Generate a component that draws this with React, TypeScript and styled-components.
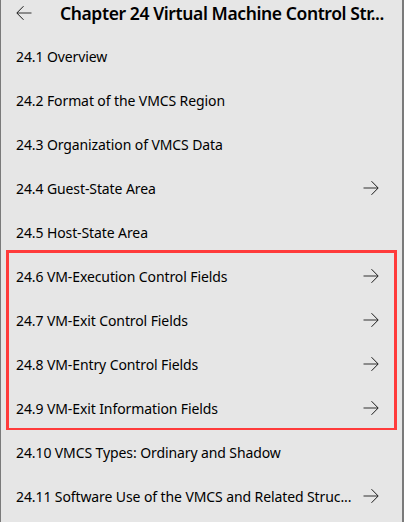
import React from "react";
import styled, { createGlobalStyle } from "styled-components";

const Global = createGlobalStyle`
  html, body { margin: 0; padding: 0; background: #e6e6e6; }
  body { font-family: "Noto Sans", "Open Sans", sans-serif; color: #000; }
`;

const Frame = styled.div`
  width: 404px;
  height: 522px;
  box-sizing: border-box;
  background: #e6e6e6;
  border-left: 1px solid #7a7a7a;
  border-right: 2px solid #7a7a7a;
  overflow: hidden;
  display: flex;
  flex-direction: column;
`;

const Header = styled.div`
  height: 34px;
  box-sizing: border-box;
  display: flex;
  align-items: center;
  padding-left: 15px;
  padding-bottom: 8px;
`;

const BackBtn = styled.div`
  width: 16px;
  height: 16px;
  display: flex;
  align-items: center;
  margin-right: 28px;
`;

const Title = styled.div`
  font-size: 17.5px;
  font-weight: 600;
  white-space: nowrap;
  letter-spacing: -0.4px;
`;

const List = styled.div`
  display: flex;
  flex-direction: column;
`;

const Group = styled.div`
  position: relative;
  display: flex;
  flex-direction: column;
  &::after {
    content: "";
    position: absolute;
    top: -4px;
    left: 5px;
    right: 5px;
    bottom: 0;
    border: 3px solid #ff3b3b;
    border-bottom-width: 2px;
    pointer-events: none;
  }
`;

const Row = styled.div`
  height: 44px;
  display: flex;
  align-items: center;
  padding-left: 15px;
  padding-right: 23px;
  font-size: 14px;
  letter-spacing: -0.1px;
  box-sizing: border-box;
`;

const Label = styled.span`
  flex: 1;
  min-width: 0;
  white-space: nowrap;
  padding-right: 8px;
`;

const ArrowIcon = styled.svg`
  flex-shrink: 0;
`;

const Arrow = () => (
  <ArrowIcon width="16" height="16" viewBox="0 0 16 16">
    <path d="M0.5 8 H15" stroke="#5a5a5a" strokeWidth="1.3" fill="none" />
    <path d="M8.5 1.2 L15.2 8 L8.5 14.8" stroke="#1a1a1a" strokeWidth="1" fill="none" />
  </ArrowIcon>
);

const Back = () => (
  <svg width="16" height="16" viewBox="0 0 16 16">
    <path d="M1 8 H15.5" stroke="#5a5a5a" strokeWidth="1.3" fill="none" />
    <path d="M7.5 1.2 L0.8 8 L7.5 14.8" stroke="#1a1a1a" strokeWidth="1" fill="none" />
  </svg>
);

type Item = { t: string; arrow?: boolean };

const before: Item[] = [
  { t: "24.1 Overview" },
  { t: "24.2 Format of the VMCS Region" },
  { t: "24.3 Organization of VMCS Data" },
  { t: "24.4 Guest-State Area", arrow: true },
  { t: "24.5 Host-State Area" },
];
const grouped: Item[] = [
  { t: "24.6 VM-Execution Control Fields", arrow: true },
  { t: "24.7 VM-Exit Control Fields", arrow: true },
  { t: "24.8 VM-Entry Control Fields", arrow: true },
  { t: "24.9 VM-Exit Information Fields", arrow: true },
];
const after: Item[] = [
  { t: "24.10 VMCS Types: Ordinary and Shadow" },
  { t: "24.11 Software Use of the VMCS and Related Struc...", arrow: true },
];

const RowItem = ({ item }: { item: Item }) => (
  <Row>
    <Label>{item.t}</Label>
    {item.arrow && <Arrow />}
  </Row>
);

export default function App() {
  return (
    <>
      <Global />
      <Frame>
        <Header>
          <BackBtn>
            <Back />
          </BackBtn>
          <Title>Chapter 24 Virtual Machine Control Str...</Title>
        </Header>
        <List>
          {before.map((i) => (
            <RowItem key={i.t} item={i} />
          ))}
          <Group>
            {grouped.map((i) => (
              <RowItem key={i.t} item={i} />
            ))}
          </Group>
          {after.map((i) => (
            <RowItem key={i.t} item={i} />
          ))}
        </List>
      </Frame>
    </>
  );
}
